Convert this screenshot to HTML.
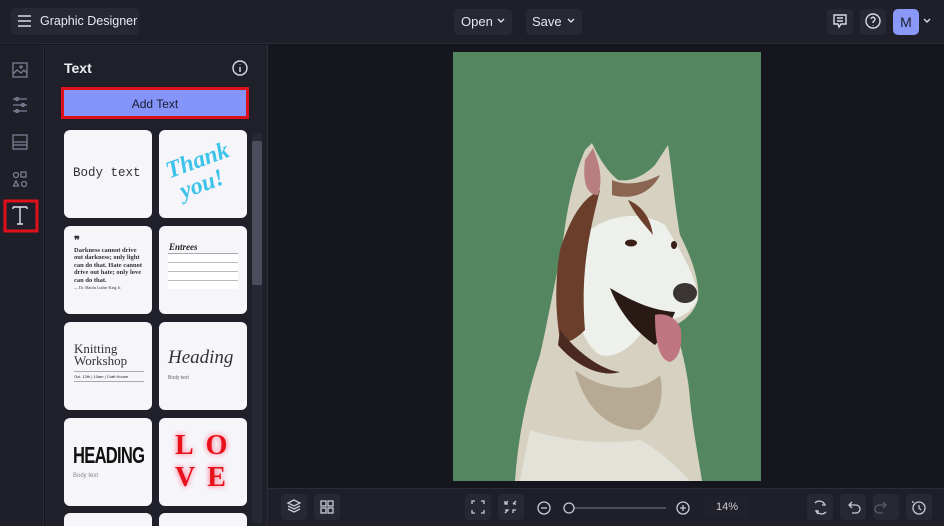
<!DOCTYPE html>
<html style="overflow:hidden;width:944px;height:526px"><head><meta charset="utf-8"><style>
*{margin:0;padding:0;box-sizing:border-box}
body{width:944px;height:526px;overflow:hidden;background:#16171e;font-family:"Liberation Sans",sans-serif;position:relative;color:#e6e7ee}
.a{position:absolute}
.btn{position:absolute;background:#262833;border-radius:4px}
.card{position:absolute;width:88px;height:88px;background:#f6f6fa;border-radius:6px;overflow:hidden;color:#222}
svg{position:absolute;left:0;top:0}
</style></head><body>
<div class="a" style="left:0;top:0;width:944px;height:44px;background:#1e1f28;border-bottom:1px solid #2b2c37"></div>
<div class="btn" style="left:11px;top:8px;width:128px;height:27px"></div>
<div class="a" style="left:40px;top:14px;font-size:12.5px;color:#e8e9f0">Graphic Designer</div>
<div class="btn" style="left:454px;top:9px;width:58px;height:26px"></div>
<div class="a" style="left:461px;top:14px;font-size:13px">Open</div>
<div class="btn" style="left:526px;top:9px;width:56px;height:26px"></div>
<div class="a" style="left:532px;top:14px;font-size:13px">Save</div>
<div class="btn" style="left:827px;top:9px;width:26px;height:26px"></div>
<div class="btn" style="left:860px;top:9px;width:26px;height:26px"></div>
<div class="a" style="left:893px;top:9px;width:26px;height:26px;background:#8b98fb;border-radius:5px;color:#1b1c2a;font-size:14px;text-align:center;line-height:26px">M</div>
<div class="a" style="left:0;top:45px;width:44px;height:481px;background:#1e1f28;border-right:1px solid #2b2c37"></div>
<div class="a" style="left:45px;top:45px;width:223px;height:481px;background:#1f2029;border-right:1px solid #2b2c37;overflow:hidden">
<div class="a" style="left:19px;top:15px;font-size:14px;font-weight:bold;color:#eceef4">Text</div>
<div class="a" style="left:16px;top:42px;width:188px;height:32px;border:3px solid #e0101a;background:#8594fb"></div>
<div class="a" style="left:16px;top:52px;width:188px;text-align:center;font-size:12px;color:#1a1b2a">Add Text</div>
<div class="a" style="left:207px;top:88px;width:10px;height:390px;background:#262833"></div>
<div class="a" style="left:207px;top:96px;width:10px;height:144px;background:#4b4d5c;border-radius:2px"></div>
<div class="card" style="left:19px;top:85px"><div class="a" style="left:9px;top:36px;font-family:'Liberation Mono',monospace;font-size:12.5px;color:#333">Body text</div></div>
<div class="card" style="left:114px;top:85px"><div class="a" style="left:10px;top:18px;font-family:'Liberation Serif',serif;font-style:italic;font-weight:bold;font-size:24px;color:#3ec3ea;transform:rotate(-20deg);line-height:24px">Thank<br>&nbsp;you!</div></div>
<div class="card" style="left:19px;top:181px"><div class="a" style="left:10px;top:12px;width:72px;font-family:'Liberation Serif',serif;font-weight:bold;font-size:6.5px;line-height:7.5px;color:#333"><span style="font-size:11px">❞</span><br>Darkness cannot drive out darkness; only light can do that. Hate cannot drive out hate; only love can do that.<br><span style="font-size:4px;font-weight:normal">— Dr. Martin Luther King Jr.</span></div></div>
<div class="card" style="left:114px;top:181px"><div class="a" style="left:10px;top:16px;font-family:'Liberation Serif',serif;font-style:italic;font-weight:bold;font-size:9px">Entrees</div>
<div class="a" style="left:9px;top:27px;width:70px;height:36px;border-top:1px solid #aaa;background:repeating-linear-gradient(#fff 0 8px,#bbb 8px 9px)"></div></div>
<div class="card" style="left:19px;top:277px"><div class="a" style="left:10px;top:21px;font-family:'Liberation Serif',serif;font-size:13px;line-height:12px;color:#333">Knitting<br>Workshop</div><div class="a" style="left:10px;top:49px;width:70px;border-top:1px solid #aaa;border-bottom:1px solid #aaa;font-size:4px;padding:2px 0">Oct. 12th | 10am | Craft House</div></div>
<div class="card" style="left:114px;top:277px"><div class="a" style="left:9px;top:25px;font-family:'Liberation Serif',serif;font-style:italic;font-size:19px;color:#333">Heading</div><div class="a" style="left:9px;top:53px;font-size:5px;color:#666">Body text</div></div>
<div class="card" style="left:19px;top:373px"><div class="a" style="left:9px;top:24px;font-family:'Liberation Sans',sans-serif;font-weight:bold;font-size:23px;letter-spacing:-1px;color:#111;transform:scaleX(.72);transform-origin:left">HEADING</div><div class="a" style="left:9px;top:55px;font-size:6px;color:#888">Body text</div></div>
<div class="card" style="left:114px;top:373px"><div class="a" style="left:16px;top:12px;font-family:'Liberation Serif',serif;font-weight:bold;font-size:28px;line-height:32px;letter-spacing:12px;color:#e8101a;text-shadow:0 0 6px #ff5a78">LO<br>VE</div></div>
<div class="card" style="left:19px;top:468px;height:13px;border-radius:6px 6px 0 0"></div>
<div class="card" style="left:114px;top:468px;height:13px;border-radius:6px 6px 0 0"></div>
</div>
<div class="a" style="left:268px;top:488px;width:676px;height:38px;background:#1e1f28;border-top:1px solid #2b2c37"></div>
<div class="btn" style="left:281px;top:494px;width:26px;height:26px"></div>
<div class="btn" style="left:314px;top:494px;width:26px;height:26px"></div>
<div class="btn" style="left:465px;top:494px;width:26px;height:26px"></div>
<div class="btn" style="left:498px;top:494px;width:26px;height:26px"></div>
<div class="btn" style="left:703px;top:496px;width:47px;height:22px;background:#20212b"></div>
<div class="a" style="left:716px;top:501px;font-size:11px;color:#ccc">14%</div>
<div class="btn" style="left:807px;top:494px;width:26px;height:26px"></div>
<div class="btn" style="left:840px;top:494px;width:26px;height:26px"></div>
<div class="btn" style="left:873px;top:494px;width:26px;height:26px"></div>
<div class="btn" style="left:906px;top:494px;width:26px;height:26px"></div>
<div class="a" style="left:453px;top:52px;width:308px;height:429px;background:#548660"></div>
<svg width="944" height="526" viewBox="0 0 944 526">
<g fill="none" stroke="#dadbe3" stroke-width="1.4">
<path d="M18 16h13M18 21h13M18 26h13"/>
<path d="M498 19l3 3 3-3M568 19l3 3 3-3M924 19l3 3 3-3"/>
<path d="M834 15h12v9h-5l-2 3-1-3h-4zM837 18h6M837 21h6"/>
<circle cx="873" cy="21" r="7"/><path d="M871 19a2 2 0 1 1 3 2l-1 1v1M873 25v.5"/>
<circle cx="240" cy="68" r="7"/><path d="M240 67v5M240 64.5v.5"/>
</g>
<g fill="none" stroke="#7c7f93" stroke-width="1.3">
<rect x="13" y="63" width="14" height="14"/><path d="M13 74l4-4 4 3 3-3 3 3"/><circle cx="21" cy="67" r="1"/>
<path d="M13 99h14M13 105h14M13 111h14"/><circle cx="17" cy="99" r="1.5"/><circle cx="23" cy="105" r="1.5"/><circle cx="17" cy="111" r="1.5"/>
<rect x="13" y="135" width="14" height="14"/><path d="M13 142h14M13 145h14"/>
<circle cx="16" cy="175" r="2.5"/><rect x="21" y="172" width="5" height="5"/><path d="M13.5 186l2.5-5 2.5 5z"/><circle cx="24" cy="184" r="2.5"/>
</g>
<rect x="5" y="201" width="32" height="30" fill="none" stroke="#e0101a" stroke-width="3"/>
<path d="M13 207h14M13 207v2M27 207v2M20 207v17M17 224h6" stroke="#e2e3ea" stroke-width="1.4" fill="none"/>
<g fill="none" stroke="#c9cad3" stroke-width="1.3">
<path d="M294 500l-6 3 6 3 6-3zM288 506l6 3 6-3M288 509l6 3 6-3"/>
<rect x="321" y="501" width="5" height="5"/><rect x="328" y="501" width="5" height="5"/><rect x="321" y="508" width="5" height="5"/><rect x="328" y="508" width="5" height="5"/>
<path d="M472 504v-3h3M481 501h3v3M484 510v3h-3M475 513h-3v-3"/>
<path d="M505 501v3h3M505 504l3-3M516 501l-3 3M513 504h3M505 513l3-3h-3M513 513v-3h3"/>
<circle cx="544" cy="508" r="6"/><path d="M541 508h6"/>
<circle cx="683" cy="508" r="6"/><path d="M680 508h6M683 505v6"/>
<path d="M574 508h92" stroke="#6a6c7a"/><circle cx="569" cy="508" r="5" fill="#1e1f28"/>
<path d="M815 503a6 6 0 0 1 10 2M826 512a6 6 0 0 1-10-2M823 502l2 3 -3 0M818 514l-2-3 3 0"/>
<path d="M849 505h7a4 4 0 0 1 0 8h-4M852 502l-3 3 3 3"/>
<path d="M886 505h-7a4 4 0 0 0 0 8h4M883 502l3 3-3 3" stroke="#5a5c69"/>
<circle cx="919" cy="508" r="6"/><path d="M919 505v3l2 2M913 503v-2"/>
</g>
<path d="M515 481 C518 440 525 400 540 355 C548 320 555 280 562 250 C566 215 572 180 585 150 L592 143 C600 160 608 172 618 180 C632 182 645 175 655 165 L668 145 C672 170 674 200 680 235 C692 258 700 282 698 300 C693 315 682 322 675 325 C680 345 688 370 690 400 C693 430 698 455 702 481 Z" fill="#d6d1c0"/>
<path d="M590 230 C610 215 640 210 665 225 C680 250 700 282 697 300 C690 318 670 322 650 318 C640 340 620 360 600 355 C585 345 578 325 575 300 C575 270 580 245 590 230Z" fill="#eef0ec"/>
<path d="M560 250 C570 220 580 200 600 190 C590 230 580 270 585 330 C575 340 565 345 560 340 C555 310 555 280 560 250Z" fill="#6b3e2c"/>
<path d="M560 330 C575 350 600 370 620 372 C600 378 575 365 558 345Z" fill="#4a2a20"/>
<path d="M593 148 C600 165 603 180 598 195 C588 195 582 185 585 160Z" fill="#b97f7f"/>
<path d="M612 180 C630 188 650 180 660 175 C650 195 630 200 612 195Z" fill="#8a6552"/>
<path d="M628 200 C640 205 650 215 653 235 C645 225 635 215 628 200Z" fill="#6b3e2c"/>
<ellipse cx="631" cy="243" rx="6" ry="3.5" fill="#3a1f17"/>
<ellipse cx="674" cy="245" rx="3" ry="4" fill="#3a1f17"/>
<ellipse cx="685" cy="293" rx="12" ry="10" fill="#3a3434"/>
<path d="M610 288 C630 300 650 310 675 312 C670 325 660 340 655 345 C640 335 620 315 610 288Z" fill="#2a1a16"/>
<path d="M655 315 C665 312 678 318 681 330 C682 345 680 358 670 362 C660 360 655 345 655 315Z" fill="#c07680"/>
<path d="M575 370 C600 390 640 395 660 375 C665 395 660 420 640 430 C610 430 585 410 575 370Z" fill="#a89a82" opacity=".7"/>
<path d="M530 430 C560 440 600 445 640 440 C660 450 680 470 690 481 L520 481Z" fill="#e8e9e4" opacity=".7"/>
</svg>
</body></html>
